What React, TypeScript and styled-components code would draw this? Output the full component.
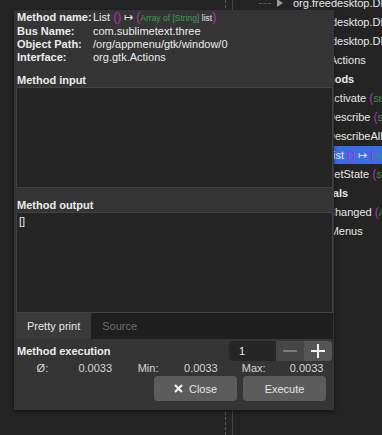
import React from "react";
import styled, { createGlobalStyle } from "styled-components";

const GlobalStyle = createGlobalStyle`
  html, body {
    margin: 0;
    padding: 0;
    background: #242424;
  }
  body {
    font-family: "Liberation Sans", "Noto Sans", sans-serif;
    font-size: 11px;
    color: #ececec;
  }
`;

const Screen = styled.div`
  position: relative;
  width: 382px;
  height: 435px;
  overflow: hidden;
  display: flex;
  background: #242424;
`;

const LeftPane = styled.div`
  width: 232px;
  flex-shrink: 0;
  display: flex;
  justify-content: flex-end;
  border-right: 1px solid #454545;
`;

const Guide = styled.div`
  width: 0;
  margin-right: 6px;
  border-left: 1px dashed #5c5c5c;
`;

const TreePane = styled.div`
  flex: 1;
  min-width: 0;
  display: flex;
  flex-direction: column;
  margin-top: -6px;
`;

const TreeRow = styled.div<{ $level: number; $selected?: boolean; $bold?: boolean }>`
  height: 18px;
  margin-bottom: 1px;
  display: flex;
  align-items: center;
  white-space: nowrap;
  padding-left: ${(p) => (p.$level === 0 ? 26 : 42 + p.$level * 18)}px;
  background: ${(p) => (p.$selected ? "#3b6de4" : "transparent")};
  font-weight: ${(p) => (p.$bold ? "bold" : "normal")};
  color: #e8e8e8;
`;

const Connector = styled.span`
  width: 12px;
  height: 0;
  border-top: 1px dashed #5c5c5c;
  margin-right: 6px;
  flex-shrink: 0;
`;

const Expander = styled.span<{ $show?: boolean }>`
  width: 16px;
  flex-shrink: 0;
  display: flex;
  align-items: center;
  svg {
    visibility: ${(p) => (p.$show ? "visible" : "hidden")};
  }
`;

const Paren = styled.span`
  color: #b52fc2;
  font-size: 12px;
`;

const TypeText = styled.span`
  color: #3f9d57;
  font-size: 8.5px;
`;

const ArgName = styled.span`
  color: #e8e8e8;
  font-size: 8.5px;
`;

const Dialog = styled.div`
  position: absolute;
  left: 14px;
  top: 10px;
  width: 320px;
  height: 400px;
  box-sizing: border-box;
  padding: 1px 1px 9px 2px;
  background: #353535;
  box-shadow: 0 2px 4px rgba(0, 0, 0, 0.45);
  display: flex;
  flex-direction: column;
`;

const InfoGrid = styled.div`
  display: grid;
  grid-template-columns: 76px 1fr;
  line-height: 13px;
  height: 52px;
  padding-left: 1px;
  white-space: nowrap;
`;

const InfoLabel = styled.span`
  font-weight: bold;
`;

const SectionLabel = styled.div<{ $gap: number }>`
  margin-top: ${(p) => p.$gap}px;
  height: 13px;
  line-height: 13px;
  padding-left: 1px;
  font-weight: bold;
`;

const TextBox = styled.div`
  height: 101px;
  box-sizing: border-box;
  border: 1px solid #424242;
  background: #252525;
  padding: 2px 0 0 2px;
  line-height: 13px;
`;

const TabBar = styled.div`
  height: 26px;
  display: flex;
  background: #1f1f1f;
`;

const Tab = styled.div<{ $active?: boolean }>`
  padding: 0 11px;
  display: flex;
  align-items: center;
  background: ${(p) => (p.$active ? "#3a3a3a" : "transparent")};
  color: ${(p) => (p.$active ? "#e6e6e6" : "#6f6f6f")};
`;

const ExecRow = styled.div`
  margin-top: 1px;
  height: 21px;
  display: flex;
  align-items: center;
  justify-content: space-between;
  padding-right: 1px;
`;

const ExecLabel = styled.span`
  font-weight: bold;
  padding-left: 1px;
`;

const Spin = styled.div`
  display: flex;
  height: 20px;
`;

const SpinEntry = styled.div`
  width: 47px;
  box-sizing: border-box;
  padding-left: 10px;
  display: flex;
  align-items: center;
  background: #262626;
  border-radius: 4px 0 0 4px;
  color: #f0f0f0;
`;

const SpinButton = styled.div<{ $enabled?: boolean; $last?: boolean }>`
  width: 28px;
  display: flex;
  align-items: center;
  justify-content: center;
  background: ${(p) => (p.$enabled ? "#565656" : "#464646")};
  border-radius: ${(p) => (p.$last ? "0 4px 4px 0" : "0")};
  color: ${(p) => (p.$enabled ? "#f2f2f2" : "#7c7c7c")};
`;

const StatsGrid = styled.div`
  margin-top: 1px;
  height: 13px;
  display: grid;
  grid-template-columns: repeat(6, 1fr);
  line-height: 13px;
  color: #d8d8d8;
  text-align: center;
`;

const ButtonRow = styled.div`
  margin-top: 1px;
  display: flex;
  justify-content: flex-end;
  gap: 6px;
  padding-right: 7px;
`;

const Button = styled.button`
  width: 83px;
  height: 25px;
  border: none;
  border-radius: 4px;
  background: #5c5c5c;
  color: #e4e4e4;
  font-family: inherit;
  font-size: 11px;
  display: flex;
  align-items: center;
  justify-content: center;
  gap: 6px;
  padding: 0;
`;

const Signature = ({ args, ret }: { args: React.ReactNode; ret?: React.ReactNode }) => (
  <>
    {" "}
    <Paren>(</Paren>
    {args}
    <Paren>)</Paren>
    {ret !== undefined && (
      <>
        {" ↦ "}
        <Paren>(</Paren>
        {ret}
        <Paren>)</Paren>
      </>
    )}
  </>
);

const Triangle = () => (
  <svg width="6" height="8" viewBox="0 0 6 8">
    <path d="M0 0 L6 4 L0 8 Z" fill="#9a9a9a" />
  </svg>
);

const Glyph = ({ kind }: { kind: "plus" | "minus" }) => (
  <svg width="14" height="14" viewBox="0 0 14 14">
    <path d={kind === "plus" ? "M0 7H14M7 0V14" : "M0 7H14"} stroke="currentColor" strokeWidth="2" />
  </svg>
);

const CloseIcon = () => (
  <svg width="9" height="9" viewBox="0 0 9 9">
    <path d="M1 1L8 8M8 1L1 8" stroke="#f0f0f0" strokeWidth="2.2" />
  </svg>
);

const strings = (
  <>
    <TypeText>Array of [String]</TypeText>
    <ArgName> list</ArgName>
  </>
);

const actionArg = (
  <>
    <TypeText>String</TypeText>
    <ArgName> action_name</ArgName>
  </>
);

const treeRows = [
  { level: 0, expander: true, label: "org.freedesktop.DBus.Introspectable" },
  { level: 0, label: "org.freedesktop.DBus.Peer" },
  { level: 0, label: "org.freedesktop.DBus.Properties" },
  { level: 0, label: "org.gtk.Actions" },
  { level: 1, bold: true, label: "Methods" },
  { level: 2, label: "Activate", sig: <Signature args={actionArg} /> },
  { level: 2, label: "Describe", sig: <Signature args={actionArg} ret={<TypeText>Struct</TypeText>} /> },
  { level: 2, label: "DescribeAll", sig: <Signature args={null} ret={<TypeText>Dict</TypeText>} /> },
  { level: 2, label: "List", selected: true, sig: <Signature args={null} ret={strings} /> },
  { level: 2, label: "SetState", sig: <Signature args={actionArg} /> },
  { level: 1, bold: true, label: "Signals" },
  {
    level: 2,
    label: "Changed",
    sig: <Signature args={<><TypeText>Array of [String]</TypeText><ArgName> removals</ArgName></>} />,
  },
  { level: 0, label: "org.gtk.Menus" },
];

const stats = [
  ["Ø:", "0.0033"],
  ["Min:", "0.0033"],
  ["Max:", "0.0033"],
];

export default function App() {
  return (
    <Screen>
      <GlobalStyle />
      <LeftPane>
        <Guide />
      </LeftPane>
      <TreePane>
        {treeRows.map((row, i) => (
          <TreeRow key={i} $level={row.level} $selected={row.selected} $bold={row.bold}>
            {row.level === 0 && <Connector />}
            <Expander $show={row.expander}>
              <Triangle />
            </Expander>
            <span>
              {row.label}
              {row.sig}
            </span>
          </TreeRow>
        ))}
      </TreePane>

      <Dialog>
        <InfoGrid>
          <InfoLabel>Method name:</InfoLabel>
          <span>
            List
            <Signature args={null} ret={strings} />
          </span>
          <InfoLabel>Bus Name:</InfoLabel>
          <span>com.sublimetext.three</span>
          <InfoLabel>Object Path:</InfoLabel>
          <span>/org/appmenu/gtk/window/0</span>
          <InfoLabel>Interface:</InfoLabel>
          <span>org.gtk.Actions</span>
        </InfoGrid>

        <SectionLabel $gap={11}>Method input</SectionLabel>
        <TextBox />

        <SectionLabel $gap={11}>Method output</SectionLabel>
        <TextBox>[]</TextBox>
        <TabBar>
          <Tab $active>Pretty print</Tab>
          <Tab>Source</Tab>
        </TabBar>

        <ExecRow>
          <ExecLabel>Method execution</ExecLabel>
          <Spin>
            <SpinEntry>1</SpinEntry>
            <SpinButton>
              <Glyph kind="minus" />
            </SpinButton>
            <SpinButton $enabled $last>
              <Glyph kind="plus" />
            </SpinButton>
          </Spin>
        </ExecRow>

        <StatsGrid>
          {stats.map(([label, value]) => (
            <React.Fragment key={label}>
              <span>{label}</span>
              <span>{value}</span>
            </React.Fragment>
          ))}
        </StatsGrid>

        <ButtonRow>
          <Button>
            <CloseIcon />
            Close
          </Button>
          <Button>Execute</Button>
        </ButtonRow>
      </Dialog>
    </Screen>
  );
}
